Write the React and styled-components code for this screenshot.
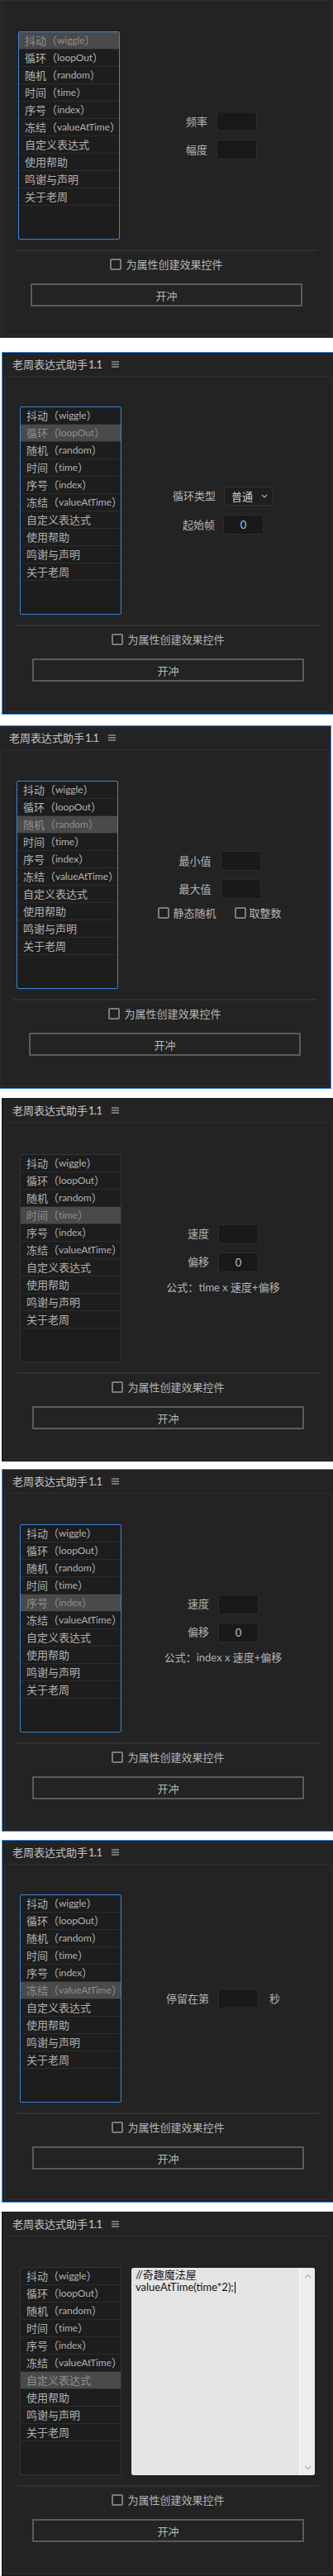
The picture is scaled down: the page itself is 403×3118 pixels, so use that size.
import React from "react";
import styled, { createGlobalStyle } from "styled-components";

const BLUE = "#3a84d6";

const GlobalStyle = createGlobalStyle`
  html, body {
    margin: 0;
    padding: 0;
    background: #ffffff;
  }
  body {
    font-family: "Lato", "Noto Sans CJK SC", sans-serif;
    font-size: 13px;
    color: #b3b3b3;
  }
  * {
    box-sizing: border-box;
  }
`;

// menu entries: chinese name plus the expression it builds
const items = [
  ["抖动", "wiggle"],
  ["循环", "loopOut"],
  ["随机", "random"],
  ["时间", "time"],
  ["序号", "index"],
  ["冻结", "valueAtTime"],
  ["自定义表达式"],
  ["使用帮助"],
  ["鸣谢与声明"],
  ["关于老周"],
];

function Hamburger() {
  return (
    <svg width="9" height="8" viewBox="0 0 9 8">
      <path d="M0 1h9M0 4h9M0 7h9" stroke="#c8c8c8" strokeWidth="1.1" />
    </svg>
  );
}

function Chevron({ up }) {
  return (
    <svg width="9" height="6" viewBox="0 0 9 6">
      <polyline
        points={up ? "1,5 4.5,1.5 8,5" : "1,1 4.5,4.5 8,1"}
        fill="none"
        stroke="#b8b8b8"
        strokeWidth="1.3"
      />
    </svg>
  );
}

function SelectArrow() {
  return (
    <svg width="8" height="5" viewBox="0 0 8 5">
      <polyline points="1,1 4,4 7,1" fill="none" stroke="#b0b0b0" strokeWidth="1.1" />
    </svg>
  );
}

function Wiggle() {
  return (
    <Side>
      <Field>
        <Label>频率</Label>
        <Input />
      </Field>
      <Field>
        <Label>幅度</Label>
        <Input />
      </Field>
    </Side>
  );
}

function Loop() {
  return (
    <Side $gap={11}>
      <Field $gap={10}>
        <Label>循环类型</Label>
        <Select>
          <span>普通</span>
          <SelectArrow />
        </Select>
      </Field>
      <Field $gap={10}>
        <Label>起始帧</Label>
        <Input>0</Input>
      </Field>
    </Side>
  );
}

function Random() {
  return (
    <Side>
      <Field>
        <Label>最小值</Label>
        <Input />
      </Field>
      <Field>
        <Label>最大值</Label>
        <Input />
      </Field>
      <Checks>
        <Check>
          <Box />
          静态随机
        </Check>
        <Check>
          <Box />
          取整数
        </Check>
      </Checks>
    </Side>
  );
}

function Speed({ base }) {
  return (
    <Side>
      <Field>
        <Label>速度</Label>
        <Input />
      </Field>
      <Field>
        <Label>偏移</Label>
        <Input>0</Input>
      </Field>
      <Formula>
        公式：<Latin>{base} x </Latin>速度+偏移
      </Formula>
    </Side>
  );
}

function Freeze() {
  return (
    <Side>
      <Field>
        <Label>停留在第</Label>
        <Input />
        <Label $pad={2}>秒</Label>
      </Field>
    </Side>
  );
}

function Custom() {
  return (
    <Side $fill>
      <Editor>
        <Code>
          <div>//奇趣魔法屋</div>
          <div>
            valueAtTime(time*2);<Caret />
          </div>
        </Code>
        <Scroll>
          <Chevron up />
          <Chevron />
        </Scroll>
      </Editor>
    </Side>
  );
}

const panels = [
  { h: 409, gap: 0, shift: 0, frame: "#2e2e2e", header: false, focus: true, pad: 37, side: <Wiggle /> },
  { h: 439, gap: 17, shift: 2, frame: BLUE, header: true, focus: true, pad: 36, side: <Loop /> },
  { h: 440, gap: 13, shift: -2, frame: BLUE, header: true, focus: true, pad: 37, side: <Random /> },
  { h: 440, gap: 11, shift: 2, frame: "#1a1a1a", header: true, focus: false, pad: 38, side: <Speed base="time" /> },
  { h: 439, gap: 9, shift: 2, frame: BLUE, header: true, focus: true, pad: 37, side: <Speed base="index" /> },
  { h: 439, gap: 10, shift: 2, frame: BLUE, header: true, focus: true, pad: 36, side: <Freeze /> },
  { h: 441, gap: 11, shift: 2, frame: "#1a1a1a", header: true, focus: false, pad: 37, side: <Custom /> },
];

function App() {
  return (
    <Page>
      <GlobalStyle />
      {panels.map((p, i) => (
        <Panel key={i} $h={p.h} $gap={p.gap} $shift={p.shift} $frame={p.frame}>
          {p.header && (
            <Header>
              <Title>
                老周表达式助手<Version>1.1</Version>
              </Title>
              <Hamburger />
            </Header>
          )}
          <Body $pad={p.pad} $open={!p.header}>
            <Main>
              <List $focus={p.focus}>
                {items.map(([zh, en], j) => (
                  <Item key={zh} $selected={j === i}>
                    {zh}
                    {en && (
                      <>
                        （<En>{en}</En>）
                      </>
                    )}
                  </Item>
                ))}
              </List>
              {p.side}
            </Main>
            <Footer>
              <Divider />
              <Check $center>
                <Box />
                为属性创建效果控件
              </Check>
              <Button>开冲</Button>
            </Footer>
          </Body>
        </Panel>
      ))}
    </Page>
  );
}

const Page = styled.div`
  width: 403px;
  overflow: hidden;
`;

const Panel = styled.section`
  width: 403px;
  height: ${({ $h }) => $h}px;
  margin-top: ${({ $gap }) => $gap}px;
  margin-left: ${({ $shift }) => $shift}px;
  background: #232323;
  border: 1px solid ${({ $frame }) => $frame};
  display: flex;
  flex-direction: column;
  overflow: hidden;
`;

const Header = styled.header`
  height: 28px;
  flex: none;
  display: flex;
  align-items: center;
  gap: 11px;
  padding-left: 12px;
`;

const Title = styled.span`
  color: #c3c3c3;
  font-size: 13px;
  line-height: 1;
  white-space: nowrap;
`;

const Version = styled.span`
  margin-left: 1px;
  letter-spacing: -0.5px;
  color: #c8c8c8;
`;

const Body = styled.div`
  flex: 1;
  margin: 0 2px 2px;
  border: 1px solid #2d2d2d;
  border-top-width: ${({ $open }) => ($open ? 0 : 1)}px;
  padding-top: ${({ $pad }) => $pad}px;
  display: flex;
  flex-direction: column;
`;

const Main = styled.div`
  height: 252px;
  flex: none;
  display: flex;
  align-items: stretch;
  padding: 0 8px 0 18px;
`;

const List = styled.ul`
  width: 123px;
  height: 252px;
  flex: none;
  margin: 0;
  padding: 0;
  list-style: none;
  background: #1d1d1d;
  border: 1px solid ${({ $focus }) => ($focus ? BLUE : "#353535")};
  border-radius: 2px;
  overflow: hidden;
`;

const Item = styled.li`
  height: 21px;
  display: flex;
  align-items: center;
  padding-left: 7px;
  border-bottom: 1px solid #2c2c2c;
  background: ${({ $selected }) => ($selected ? "#4a4a4a" : "transparent")};
  color: ${({ $selected }) => ($selected ? "#8e8e8e" : "#b1b1b1")};
  line-height: 1;
  white-space: nowrap;
`;

const En = styled.span`
  font-size: 12px;
  letter-spacing: -0.1px;
`;

const Side = styled.div`
  flex: 1;
  display: flex;
  flex-direction: column;
  align-items: ${({ $fill }) => ($fill ? "stretch" : "center")};
  justify-content: center;
  gap: ${({ $gap }) => $gap || 10}px;
  padding: ${({ $fill }) => ($fill ? "1px 12px 0" : "0")};
`;

const Field = styled.div`
  display: flex;
  align-items: center;
  gap: ${({ $gap }) => $gap || 11}px;
`;

const Label = styled.span`
  color: #b3b3b3;
  line-height: 1;
  white-space: nowrap;
  padding-left: ${({ $pad }) => $pad || 0}px;
`;

const Input = styled.div`
  width: 49px;
  height: 24px;
  background: #191919;
  border: 1px solid #2c2c2c;
  border-radius: 3px;
  display: flex;
  align-items: center;
  justify-content: center;
  color: #a9c2de;
  font-size: 13px;
`;

const Select = styled.div`
  width: 60px;
  height: 23px;
  background: #1e1e1e;
  border: 1px solid #343434;
  border-radius: 3px;
  display: flex;
  align-items: center;
  justify-content: space-between;
  padding: 0 6px 0 8px;
  color: #d2d2d2;
  font-size: 13px;
`;

const Checks = styled.div`
  display: flex;
  align-items: center;
  gap: 22px;
`;

const Check = styled.label`
  display: flex;
  align-items: center;
  gap: ${({ $center }) => ($center ? 5 : 4)}px;
  height: 14px;
  line-height: 1;
  color: #b3b3b3;
  white-space: nowrap;
  margin-top: ${({ $center }) => ($center ? 9 : 0)}px;
`;

const Box = styled.span`
  width: 14px;
  height: 14px;
  flex: none;
  border: 2px solid #7b7b7b;
  border-radius: 2px;
  background: #202020;
`;

const Formula = styled.div`
  margin-top: 1px;
  line-height: 14px;
  color: #b3b3b3;
  white-space: nowrap;
`;

const Latin = styled.span`
  color: #a9b2bd;
`;

const Editor = styled.div`
  flex: 1;
  display: flex;
  background: #e5e5e5;
  border-radius: 3px;
  overflow: hidden;
`;

const Code = styled.div`
  flex: 1;
  padding: 1px 0 0 5px;
  color: #141414;
  font-size: 13px;
  line-height: 15px;
  white-space: nowrap;
`;

const Caret = styled.span`
  display: inline-block;
  width: 1px;
  height: 14px;
  margin-left: 1px;
  vertical-align: -3px;
  background: #000000;
`;

const Scroll = styled.div`
  width: 19px;
  flex: none;
  background: #ededed;
  border-left: 1px solid #f8f8f8;
  display: flex;
  flex-direction: column;
  align-items: center;
  justify-content: space-between;
  padding: 7px 0 6px;
`;

const Footer = styled.div`
  display: flex;
  flex-direction: column;
  align-items: center;
  margin-top: 12px;
`;

const Divider = styled.div`
  align-self: stretch;
  margin: 0 14px;
  height: 2px;
  background: #303030;
`;

const Button = styled.button`
  align-self: stretch;
  margin: 16px 33px 0;
  height: 28px;
  padding: 0;
  border: 2px solid #5b5b5b;
  border-radius: 1px;
  background: #232323;
  color: #b8b8b8;
  font: inherit;
  font-size: 13px;
`;

export default App;
